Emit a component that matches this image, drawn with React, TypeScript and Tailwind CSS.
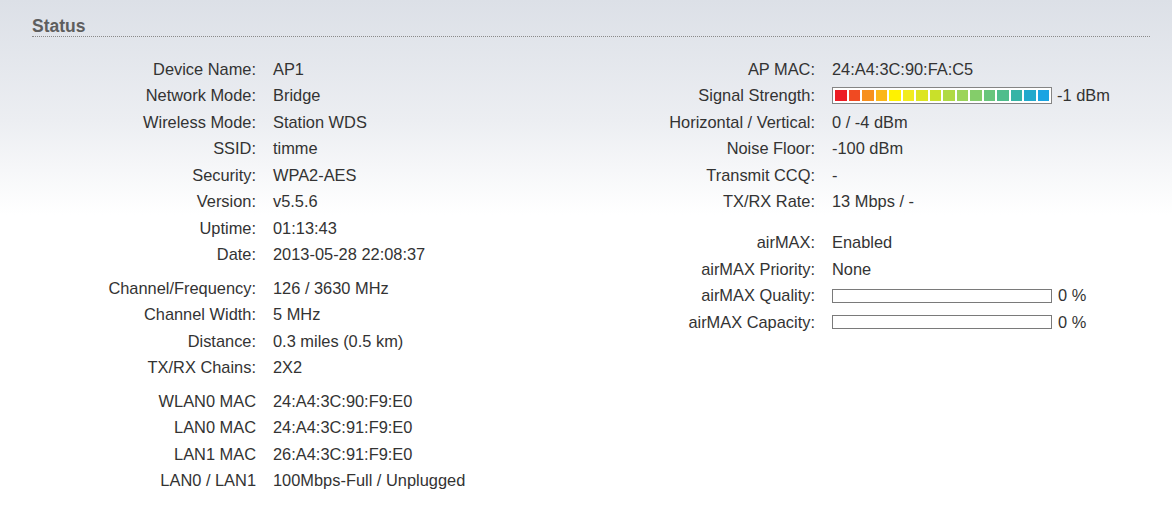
import React from "react";

const segColors = [
  "#ed1c24", "#f04a22", "#f7901e", "#fbb71a", "#fff200", "#f2ec1f", "#dde522", "#c9e02a",
  "#b0da43", "#9cd45a", "#84cd6a", "#68c57c", "#4fbd8c", "#35b4a6", "#22a9cc", "#1ba4e2",
];

function Row({ label, children, lw }: { label: string; children: React.ReactNode; lw: string }) {
  return (
    <div className="flex h-[26.5px] items-center">
      <div className={`${lw} shrink-0 text-right`}>{label}</div>
      <div className="ml-[17px] flex items-center whitespace-nowrap">{children}</div>
    </div>
  );
}

function L({ label, children }: { label: string; children: React.ReactNode }) {
  return <Row label={label} lw="w-[224px]">{children}</Row>;
}
function R({ label, children }: { label: string; children: React.ReactNode }) {
  return <Row label={label} lw="w-[255px]">{children}</Row>;
}

function EmptyBar() {
  return (
    <>
      <div className="h-[14px] w-[220px] border border-[#7a7a7a] bg-white" />
      <span className="ml-[6px]">0 %</span>
    </>
  );
}

export default function App() {
  return (
    <div
      className="h-[516px] w-[1172px] overflow-hidden bg-[linear-gradient(to_bottom,#dce0e7_0px,#eceef2_120px,#ffffff_215px)] text-[16.4px] text-[#333333]"
      style={{ fontFamily: '"Liberation Sans", Arial, sans-serif' }}
    >
      <div className="ml-[32px] mr-[22px] border-b border-dotted border-[#8a8a8a] pt-[16px] text-[17.5px] font-bold leading-[20px] text-[#5e5e5e]">
        Status
      </div>
      <div className="mt-[19px] flex">
        <div className="ml-[32px] w-[528px]">
          <div>
            <L label="Device Name:">AP1</L>
            <L label="Network Mode:">Bridge</L>
            <L label="Wireless Mode:">Station WDS</L>
            <L label="SSID:">timme</L>
            <L label="Security:">WPA2-AES</L>
            <L label="Version:">v5.5.6</L>
            <L label="Uptime:">01:13:43</L>
            <L label="Date:">2013-05-28 22:08:37</L>
          </div>
          <div className="mt-[7px]">
            <L label="Channel/Frequency:">126 / 3630 MHz</L>
            <L label="Channel Width:">5 MHz</L>
            <L label="Distance:">0.3 miles (0.5 km)</L>
            <L label="TX/RX Chains:">2X2</L>
          </div>
          <div className="mt-[7px]">
            <L label="WLAN0 MAC">24:A4:3C:90:F9:E0</L>
            <L label="LAN0 MAC">24:A4:3C:91:F9:E0</L>
            <L label="LAN1 MAC">26:A4:3C:91:F9:E0</L>
            <L label="LAN0 / LAN1">100Mbps-Full / Unplugged</L>
          </div>
        </div>
        <div>
          <div>
            <R label="AP MAC:">24:A4:3C:90:FA:C5</R>
            <R label="Signal Strength:">
              <div className="flex h-[17px] w-[220px] gap-[2px] border border-[#858585] bg-white p-[2px]">
                {segColors.map((c, i) => (
                  <div key={i} className="h-[11px] flex-1" style={{ backgroundColor: c }} />
                ))}
              </div>
              <span className="ml-[5px]">-1 dBm</span>
            </R>
            <R label="Horizontal / Vertical:">0 / -4 dBm</R>
            <R label="Noise Floor:">-100 dBm</R>
            <R label="Transmit CCQ:">-</R>
            <R label="TX/RX Rate:">13 Mbps / -</R>
          </div>
          <div className="mt-[14.5px]">
            <R label="airMAX:">Enabled</R>
            <R label="airMAX Priority:">None</R>
            <R label="airMAX Quality:">
              <EmptyBar />
            </R>
            <R label="airMAX Capacity:">
              <EmptyBar />
            </R>
          </div>
        </div>
      </div>
    </div>
  );
}
